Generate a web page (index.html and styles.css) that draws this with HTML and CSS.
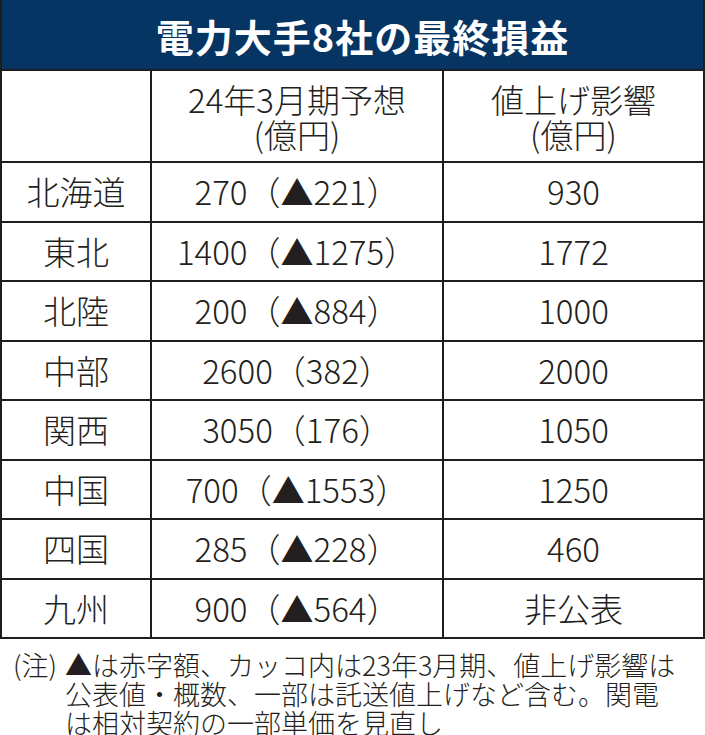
FILE: index.html
```html
<!DOCTYPE html>
<html lang="ja">
<head>
<meta charset="utf-8">
<link rel="stylesheet" href="styles.css">
</head>
<body>
<div class="chart">
  <div class="title">電力大手8社の最終損益</div>
  <div class="grid">
    <div class="cell head"></div>
    <div class="cell head">24年3月期予想<br>(億円)</div>
    <div class="cell head last">値上げ影響<br>(億円)</div>

    <div class="cell">北海道</div><div class="cell">270（▲221）</div><div class="cell last">930</div>
    <div class="cell">東北</div><div class="cell">1400（▲1275）</div><div class="cell last">1772</div>
    <div class="cell">北陸</div><div class="cell">200（▲884）</div><div class="cell last">1000</div>
    <div class="cell">中部</div><div class="cell">2600（382）</div><div class="cell last">2000</div>
    <div class="cell">関西</div><div class="cell">3050（176）</div><div class="cell last">1050</div>
    <div class="cell">中国</div><div class="cell">700（▲1553）</div><div class="cell last">1250</div>
    <div class="cell">四国</div><div class="cell">285（▲228）</div><div class="cell last">460</div>
    <div class="cell bottom">九州</div><div class="cell bottom">900（▲564）</div><div class="cell bottom last">非公表</div>
  </div>
</div>
<div class="note">
  <span class="note-label">(注)</span>
  <span class="note-body">▲は赤字額、カッコ内は23年3月期、値上げ影響は<br>公表値・概数、一部は託送値上げなど含む。関電<br>は相対契約の一部単価を見直し</span>
</div>
</body>
</html>
```

FILE: styles.css
```css
html, body {
  margin: 0;
  padding: 0;
  background: #ffffff;
}
body {
  font-family: "Noto Sans CJK JP", "Noto Sans", sans-serif;
  color: #231f20;
  width: 705px;
}
.chart {
  border: 2px solid #1e1e1e;
  border-bottom: none;
  box-sizing: border-box;
  width: 705px;
}
.title {
  background: #063563;
  color: #ffffff;
  display: flex;
  align-items: center;
  justify-content: center;
  padding-left: 20px;
  font-size: 38px;
  font-weight: 700;
  letter-spacing: 1px;
  border-bottom: 2px solid #1e1e1e;
  box-sizing: border-box;
  height: 71px;
  margin-top: -2px;
  padding-top: 2px;
}
.grid {
  display: grid;
  grid-template-columns: 150px 292px 1fr;
  grid-template-rows: 92px repeat(8, 59.5px);
}
.cell {
  display: flex;
  align-items: center;
  justify-content: center;
  text-align: center;
  font-size: 33px;
  font-weight: 300;
  line-height: 1;
  border-right: 2px solid #1e1e1e;
  border-bottom: 2px solid #1e1e1e;
}
.cell.last {
  border-right: none;
}
.cell.head {
  line-height: 35px;
  padding-top: 2px;
}
.note {
  display: flex;
  padding: 11px 0 0 13px;
  font-size: 27px;
  font-weight: 300;
  line-height: 29px;
}
.note-label {
  width: 52px;
  flex: none;
}
.note-body {
  white-space: nowrap;
}
```
